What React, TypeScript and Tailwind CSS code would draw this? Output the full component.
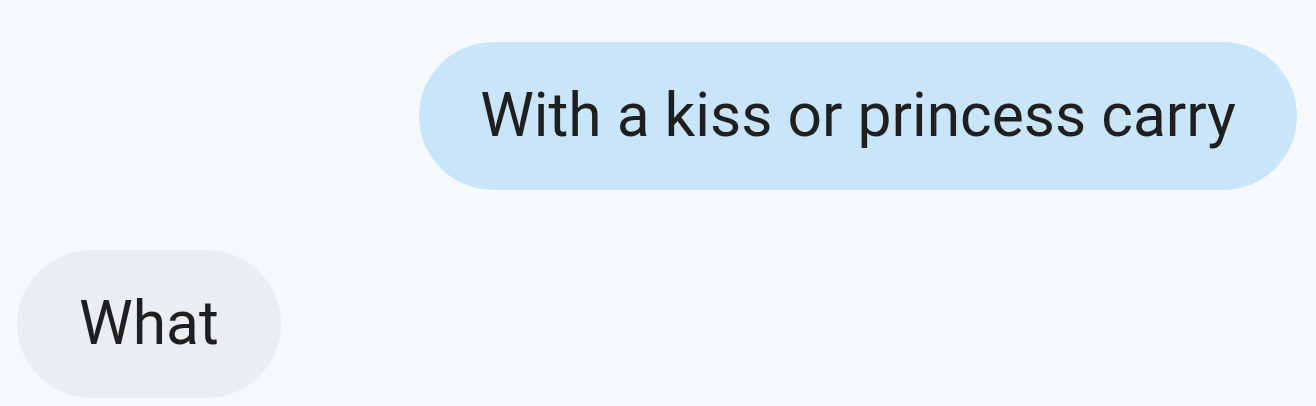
export default function App() {
  return (
    <div className="flex h-[406px] w-[1316px] flex-col bg-[#f6f9fc] pt-[42px] font-['Roboto',sans-serif] text-[#1f1f1f]">
      <div className="flex justify-end pr-[19px]">
        <div className="flex h-[148px] items-center rounded-full bg-[#c9e5fa] px-[61px] text-[60.5px] leading-none">
          With a kiss or princess carry
        </div>
      </div>
      <div className="mt-[60px] flex justify-start pl-[17px]">
        <div className="flex h-[148px] items-center rounded-full bg-[#eaeef2] px-[62px] text-[60.5px] leading-none">
          What
        </div>
      </div>
    </div>
  );
}
